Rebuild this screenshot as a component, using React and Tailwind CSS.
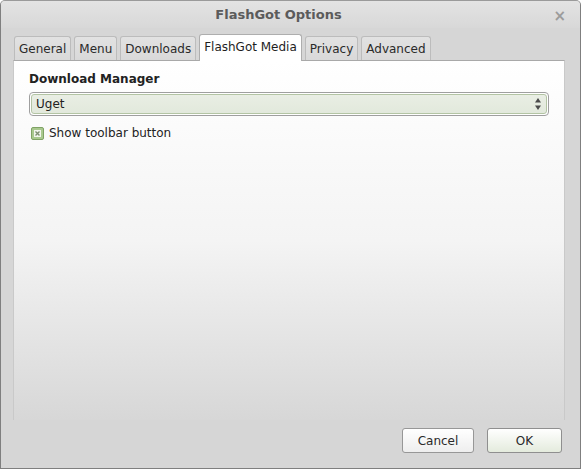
import React from "react";

const tabs = ["General", "Menu", "Downloads", "FlashGot Media", "Privacy", "Advanced"];

function Tab({ label, active }) {
  if (active) {
    return (
      <div className="relative z-10 -mb-px flex h-[27px] items-center rounded-t-[3px] border border-b-0 border-[#aeaeae] bg-white px-[4px] pb-[2px] text-[#1e1e1e]">
        {label}
      </div>
    );
  }
  return (
    <div className="flex h-[24px] items-center rounded-t-[3px] border border-b-0 border-[#bcbcbc] bg-gradient-to-b from-[#e2e2e2] to-[#d9d9d9] px-[4px] pt-[1px] text-[#2a2a2a]">
      {label}
    </div>
  );
}

function CheckIcon() {
  return (
    <svg width="13" height="13" viewBox="0 0 13 13">
      <rect x="0.5" y="0.5" width="12" height="12" rx="1.5" fill="#a9c98f" stroke="#7fa265" />
      <rect x="3" y="3" width="7" height="7" fill="#f2f5ee" />
      <path d="M4.5 4.5 L8.5 8.5 M8.5 4.5 L4.5 8.5" stroke="#7d8f70" strokeWidth="1.4" />
    </svg>
  );
}

function Arrows() {
  return (
    <svg width="8" height="14" viewBox="0 0 8 14">
      <path d="M4 1 L7 5.5 L1 5.5 Z" fill="#4a4a4a" />
      <path d="M1 8.5 L7 8.5 L4 13 Z" fill="#4a4a4a" />
    </svg>
  );
}

export default function App() {
  return (
    <div
      className="flex h-[469px] w-[581px] flex-col overflow-hidden rounded-t-[5px] border border-t-[#9a9a9a] border-x-[#7f7f7f] border-b-[#7f7f7f] bg-[#d6d6d6] text-[12px]"
      style={{ fontFamily: '"DejaVu Sans", sans-serif' }}
    >
      {/* title bar */}
      <div className="relative flex h-[27px] shrink-0 items-center justify-center bg-gradient-to-b from-[#e3e3e3] to-[#d8d8d8] pr-[24px]">
        <span className="text-[13px] font-bold text-[#5b5b5b]">FlashGot Options</span>
        <span className="absolute right-[14px] top-[4px] text-[15px] font-bold text-[#9b9b9b]">×</span>
      </div>

      {/* tabs */}
      <div className="mt-[6px] flex items-end gap-[3px] pl-[13px]">
        {tabs.map((t) => (
          <Tab key={t} label={t} active={t === "FlashGot Media"} />
        ))}
      </div>

      {/* panel */}
      <div className="ml-[12px] mr-[15px] h-[360px] shrink-0 border-t border-[#a9a9a9] border-x border-x-[#c9c9c9] bg-gradient-to-b from-white via-[#f4f4f4] to-[#d7d7d7] px-[15px] pt-[9px]">
        <div className="font-bold text-[#222]">Download Manager</div>
        <div className="mt-[4px] rounded-[4px] border border-[#9f9f9f] bg-white p-px">
          <div className="flex h-[20px] items-center justify-between rounded-[3px] border border-[#b3c4a4] bg-gradient-to-b from-[#e9eee4] to-[#e2e9dc] pl-[4px] pr-[4px] text-[#222]">
            <span>Uget</span>
            <Arrows />
          </div>
        </div>
        <div className="mt-[8px] flex items-center gap-[5px] pl-[2px] text-[#222]">
          <CheckIcon />
          <span>Show toolbar button</span>
        </div>
      </div>

      {/* buttons */}
      <div className="mt-[8px] flex justify-end gap-[13px] pr-[18px]">
        <button className="h-[25px] w-[72px] rounded-[3px] border border-[#979797] bg-gradient-to-b from-white to-[#eeeeee] text-[#2a2a2a]">
          Cancel
        </button>
        <button className="h-[25px] w-[75px] rounded-[3px] border border-[#8f8f8f] bg-gradient-to-b from-white to-[#e4ebdd] text-[#2a2a2a]">
          OK
        </button>
      </div>
    </div>
  );
}
